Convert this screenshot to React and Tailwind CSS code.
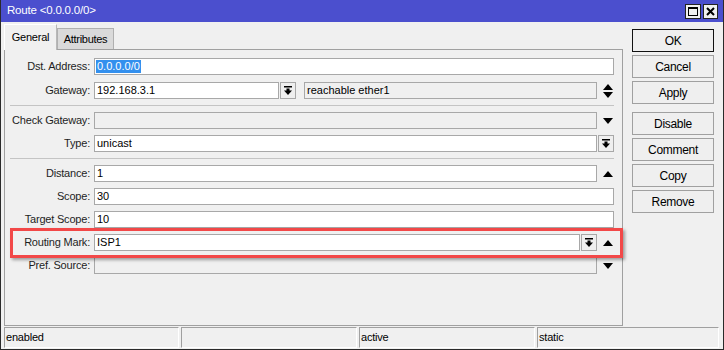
import React from 'react';

const font = { fontFamily: '"Liberation Sans", Arial, sans-serif' };

function UpArrow() {
  return (
    <svg width="10" height="6" viewBox="0 0 10 6">
      <polygon points="0,6 10,6 5,0" fill="#000" />
    </svg>
  );
}

function DownArrow() {
  return (
    <svg width="10" height="6" viewBox="0 0 10 6">
      <polygon points="0,0 10,0 5,6" fill="#000" />
    </svg>
  );
}

function UpDown() {
  return (
    <svg width="10" height="14" viewBox="0 0 10 14">
      <polygon points="0,6 10,6 5,0" fill="#000" />
      <polygon points="0,8 10,8 5,14" fill="#000" />
    </svg>
  );
}

// small "drop down" button: bar on top, arrow pointing down
function DropButton({ w = 'w-[16px]' }) {
  return (
    <div className={`${w} h-[17px] shrink-0 border border-[#a8a8a8] bg-[#efefef] flex items-center justify-center`}>
      <svg width="8" height="9" viewBox="0 0 8 9">
        <rect x="0" y="0" width="8" height="1.5" fill="#000" />
        <rect x="2.5" y="2.5" width="3" height="2.5" fill="#000" />
        <polygon points="0,4.5 8,4.5 4,9" fill="#000" />
      </svg>
    </div>
  );
}

function Field({ value, gray, className = 'flex-1' }) {
  return (
    <div
      className={`${className} h-[17px] border ${gray ? 'border-[#a8a8a8] bg-[#f0f0f0]' : 'border-[#a8a8a8] bg-white'} pl-[2px] text-[11px] leading-[15px] text-[#000] whitespace-nowrap overflow-hidden`}
    >
      {value}
    </div>
  );
}

function Row({ label, mt, children }) {
  return (
    <div className={`flex items-center h-[17px] ${mt}`}>
      <div className="w-[89px] shrink-0 pr-[4px] text-right text-[11px] tracking-[-0.2px] text-[#1e1e1e] leading-[17px]">
        {label}
      </div>
      <div className="flex-1 flex items-center">{children}</div>
    </div>
  );
}

function ArrowSlot({ children }) {
  return <div className="w-[25px] shrink-0 flex items-center pl-[6px]">{children}</div>;
}

function Btn({ label, mt, primary }) {
  return (
    <div
      className={`h-[23px] w-[82px] ${mt} border ${primary ? 'border-[#111]' : 'border-[#a0a0a0]'} bg-[#efefef] flex items-center justify-center text-[12px] tracking-[-0.3px] text-[#000]`}
    >
      {label}
    </div>
  );
}

function StatusCell({ text, w }) {
  return (
    <div className={`${w} h-[21px] border-t border-l border-[#a0a0a0] border-r border-r-white border-b border-b-white pl-[1px] text-[11px] tracking-[-0.2px] leading-[19px] text-[#000]`}>
      {text}
    </div>
  );
}

export default function App() {
  return (
    <div style={font} className="w-[724px] h-[350px] bg-[#f0f0f0] border-x border-b border-[#2a2a2a] flex flex-col overflow-hidden">
      {/* title bar */}
      <div className="h-[22px] shrink-0 bg-[#4b4fce] flex items-center justify-between pl-[6px] pr-[5px]">
        <span className="text-white text-[11.5px] tracking-[-0.2px]">Route &lt;0.0.0.0/0&gt;</span>
        <div className="flex gap-[2px]">
          <div className="w-[16px] h-[15px] bg-[#f0f0f0] border border-[#222] flex items-center justify-center">
            <div className="w-[10px] h-[9px] border border-black border-t-2" />
          </div>
          <div className="w-[15px] h-[15px] bg-[#f0f0f0] border border-[#222] flex items-center justify-center">
            <svg width="9" height="9" viewBox="0 0 9 9">
              <path d="M1 1 L8 8 M8 1 L1 8" stroke="#000" strokeWidth="2" />
            </svg>
          </div>
        </div>
      </div>

      {/* main area */}
      <div className="flex h-[304px] shrink-0">
        <div className="ml-[3px] w-[619px] flex flex-col">
          {/* tabs */}
          <div className="h-[27px] flex items-end">
            <div className="relative z-10 -mb-px h-[26px] w-[53px] bg-[#f0f0f0] border border-b-0 border-[#b8b8b8] border-l-white border-t-white flex items-center justify-center text-[11px] tracking-[-0.2px] text-[#000]">
              General
            </div>
            <div className="h-[21px] w-[57px] bg-[#dadada] border border-b-0 border-[#b0b0b0] flex items-center justify-center text-[11px] tracking-[-0.3px] text-[#000]">
              Attributes
            </div>
          </div>

          {/* panel */}
          <div className="relative flex-1 border border-[#a0a0a0] flex flex-col">
            <Row label="Dst. Address:" mt="mt-[8px]">
              <div className="flex-1 mr-[8px] h-[17px] border border-[#a8a8a8] bg-white pl-[1px] flex items-center">
                <span className="bg-[#3390ee] text-white text-[11px] leading-[13px] px-[1px]">0.0.0.0/0</span>
              </div>
            </Row>
            <Row label="Gateway:" mt="mt-[7px]">
              <Field value="192.168.3.1" className="w-[185px]" />
              <div className="ml-[1px]">
                <DropButton />
              </div>
              <Field value="reachable ether1" gray className="ml-[8px] flex-1" />
              <ArrowSlot>
                <UpDown />
              </ArrowSlot>
            </Row>

            <div className="mt-[6px] mx-[5px] mr-[8px] border-t border-[#c4c4c4]" />

            <Row label="Check Gateway:" mt="mt-[6px]">
              <Field value="" gray />
              <ArrowSlot>
                <DownArrow />
              </ArrowSlot>
            </Row>
            <Row label="Type:" mt="mt-[6px]">
              <Field value="unicast" />
              <div className="ml-[1px] mr-[8px]">
                <DropButton w="w-[16px]" />
              </div>
            </Row>

            <div className="mt-[6px] mx-[5px] mr-[8px] border-t border-[#c4c4c4]" />

            <Row label="Distance:" mt="mt-[6px]">
              <Field value="1" />
              <ArrowSlot>
                <UpArrow />
              </ArrowSlot>
            </Row>
            <Row label="Scope:" mt="mt-[6px]">
              <Field value="30" className="flex-1 mr-[8px]" />
            </Row>
            <Row label="Target Scope:" mt="mt-[6px]">
              <Field value="10" className="flex-1 mr-[8px]" />
            </Row>
            <Row label="Routing Mark:" mt="mt-[6px]">
              <Field value="ISP1" />
              <div className="ml-[1px]">
                <DropButton />
              </div>
              <ArrowSlot>
                <UpArrow />
              </ArrowSlot>
            </Row>
            <Row label="Pref. Source:" mt="mt-[6px]">
              <Field value="" gray />
              <ArrowSlot>
                <DownArrow />
              </ArrowSlot>
            </Row>

            {/* highlight annotation */}
            <div className="absolute left-[5px] top-[178px] w-[613px] h-[30px] border-[3px] border-[#f24848] shadow-[2px_2px_3px_rgba(0,0,0,0.35)] pointer-events-none" />
          </div>
        </div>

        {/* buttons */}
        <div className="ml-[9px] flex flex-col">
          <Btn label="OK" mt="mt-[7px]" primary />
          <Btn label="Cancel" mt="mt-[3px]" />
          <Btn label="Apply" mt="mt-[3px]" />
          <Btn label="Disable" mt="mt-[8px]" />
          <Btn label="Comment" mt="mt-[3px]" />
          <Btn label="Copy" mt="mt-[3px]" />
          <Btn label="Remove" mt="mt-[3px]" />
        </div>
      </div>

      {/* status bar */}
      <div className="mt-[1px] ml-[3px] flex gap-[2px]">
        <StatusCell text="enabled" w="w-[175px]" />
        <StatusCell text="" w="w-[176px]" />
        <StatusCell text="active" w="w-[176px]" />
        <StatusCell text="static" w="w-[182px]" />
      </div>
    </div>
  );
}
